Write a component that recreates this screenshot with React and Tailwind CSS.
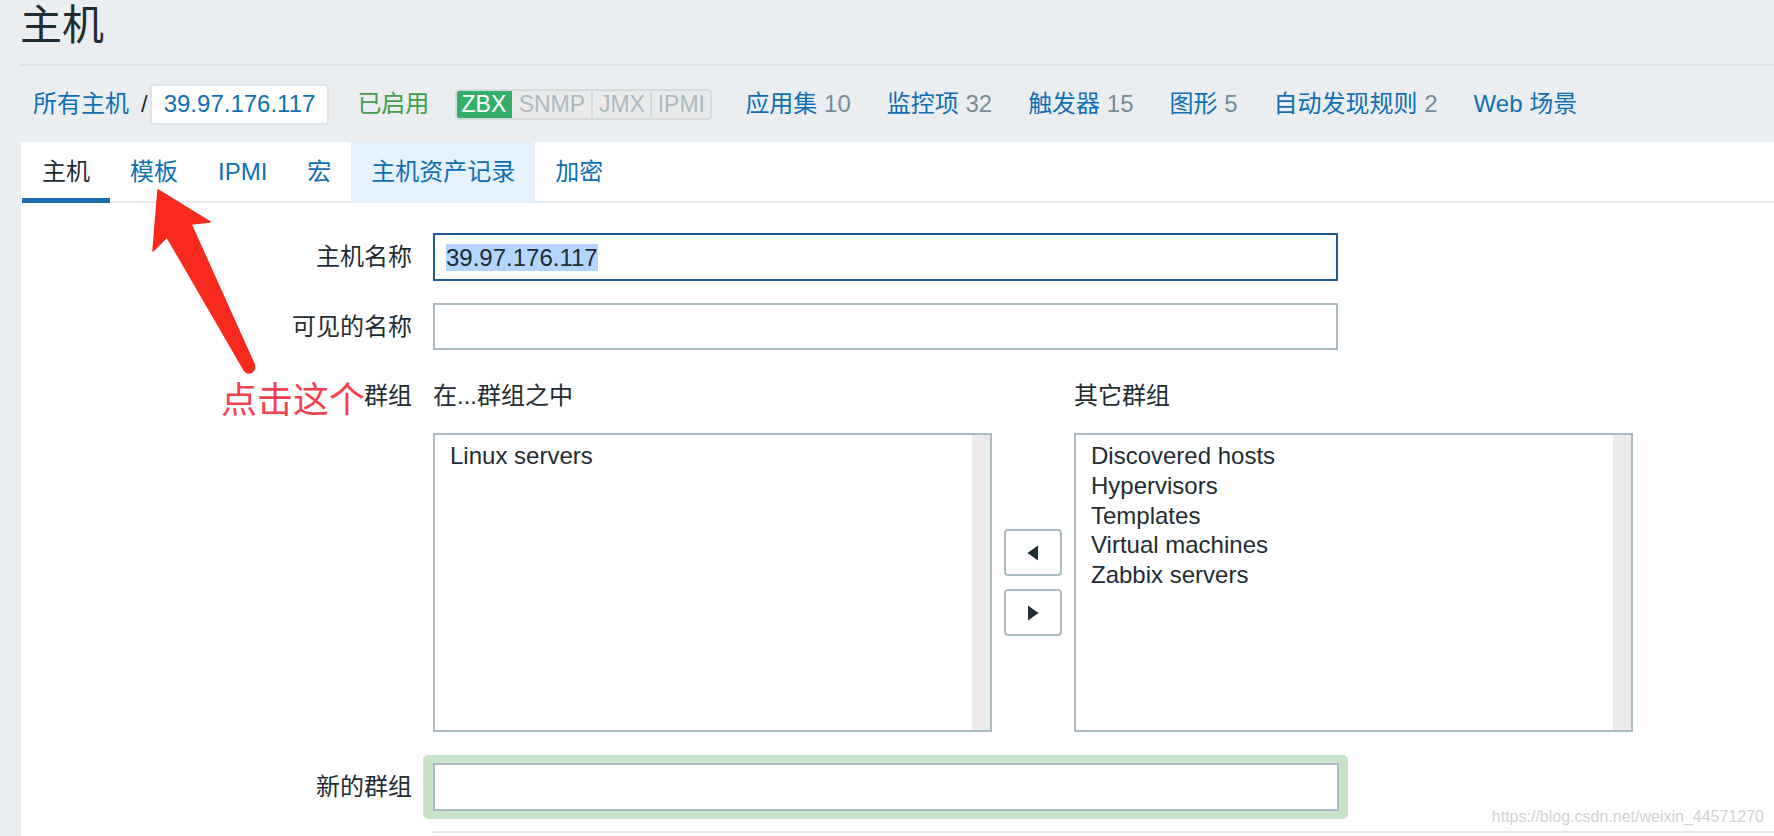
const links = [
  ["应用集", "10"],
  ["监控项", "32"],
  ["触发器", "15"],
  ["图形", "5"],
  ["自动发现规则", "2"],
  ["Web 场景", null],
];

const tabs = [
  { name: "主机", active: true },
  { name: "模板" },
  { name: "IPMI" },
  { name: "宏" },
  { name: "主机资产记录", hl: true },
  { name: "加密" },
];

function ListBox({ items }) {
  return (
    <div className="w-[559px] h-[299px] border-2 border-[#acbbc2] flex">
      <div className="flex-1 pl-[15px] pt-[6px] text-[24px] leading-[29.75px] text-[#1f2c33]">
        {items.map((item) => (
          <div key={item}>{item}</div>
        ))}
      </div>
      <div className="w-[18px] bg-[#ebebeb]" />
    </div>
  );
}

function ArrowButton({ dir }) {
  return (
    <button className="w-[58px] h-[47px] border-2 border-[#acbbc2] rounded-[4px] bg-white flex items-center justify-center">
      <svg width="12" height="16" viewBox="0 0 12 16">
        {dir === "left" ? (
          <path d="M11 0.5 L0.5 8 L11 15.5 Z" fill="#1f2c33" />
        ) : (
          <path d="M1 0.5 L11.5 8 L1 15.5 Z" fill="#1f2c33" />
        )}
      </svg>
    </button>
  );
}

function Label({ children }) {
  return (
    <div className="w-[391px] shrink-0 text-right text-[24px] text-[#1f2c33]">
      {children}
    </div>
  );
}

export default function App() {
  return (
    <div className="relative w-[1774px] h-[836px] overflow-hidden bg-[#ebeef0] font-['Liberation_Sans','Noto_Sans_CJK_SC',sans-serif] flex flex-col">
      {/* header */}
      <div className="ml-[20px] h-[66px] border-b-2 border-[#dde2e6] shrink-0">
        <h1 className="pt-[5px] text-[42px] leading-[42px] text-[#1f2c33]">主机</h1>
      </div>

      {/* breadcrumbs + nav */}
      <div className="h-[76px] shrink-0 flex items-center pl-[33px] text-[24px]">
        <span className="text-[#0f6fb4]">所有主机</span>
        <span className="ml-[12px] mr-[2px] text-[#1f2c33]">/</span>
        <span className="h-[41px] px-[12px] flex items-center bg-white border-2 border-[#dfe4e7] rounded-[4px] text-[#0f6fb4]">
          39.97.176.117
        </span>
        <span className="ml-[28px] text-[#429e47]">已启用</span>
        <div className="ml-[26px] h-[31px] flex rounded-[4px] overflow-hidden border-2 border-[#d5dce0] text-[23px] leading-none">
          <span className="w-[57px] -ml-[2px] -my-[2px] h-[31px] flex items-center justify-center bg-[#34af67] text-white rounded-l-[4px]">
            ZBX
          </span>
          <span className="w-[79px] flex items-center justify-center bg-[#ebebeb] text-[#acbbc2]">
            SNMP
          </span>
          <span className="w-[59px] flex items-center justify-center bg-[#ebebeb] text-[#acbbc2] border-l-2 border-[#d5dce0]">
            JMX
          </span>
          <span className="w-[60px] flex items-center justify-center bg-[#ebebeb] text-[#acbbc2] border-l-2 border-[#d5dce0]">
            IPMI
          </span>
        </div>
        <div className="ml-[33px] flex gap-[36px]">
          {links.map(([name, n]) => (
            <span key={name} className="whitespace-nowrap">
              <span className="text-[#0f6fb4]">{name}</span>
              {n && <span className="text-[#768d99]"> {n}</span>}
            </span>
          ))}
        </div>
      </div>

      {/* main panel */}
      <div className="ml-[21px] flex-1 bg-white">
        <div className="h-[61px] flex pl-[1px] border-b-2 border-[#ebeef0]">
          {tabs.map((t) => (
            <div
              key={t.name}
              className={
                "h-[61px] -mb-[2px] px-[20px] pt-[4px] flex items-center text-[24px] border-b-[5px] " +
                (t.active
                  ? "border-[#1f6fb0] text-[#1f2c33]"
                  : "border-transparent text-[#0f6fb4]") +
                (t.hl ? " bg-[#e5f1fc]" : "")
              }
            >
              {t.name}
            </div>
          ))}
        </div>

        <div className="pt-[30px]">
          <div className="flex items-center">
            <Label>主机名称</Label>
            <div className="ml-[21px] w-[905px] h-[48px] border-2 border-[#1f5c93] flex items-center pl-[11px] text-[24px] text-[#1f2c33]">
              <span className="bg-[#b4d5fe] leading-[27px]">39.97.176.117</span>
            </div>
          </div>

          <div className="mt-[22px] flex items-center">
            <Label>可见的名称</Label>
            <div className="ml-[21px] w-[905px] h-[47px] border-2 border-[#acbbc2]" />
          </div>

          <div className="mt-[33px] flex leading-[26px] text-[24px] text-[#1f2c33]">
            <Label>群组</Label>
            <div className="ml-[21px] w-[641px]">在...群组之中</div>
            <div>其它群组</div>
          </div>

          <div className="mt-[24px] flex">
            <div className="w-[412px] shrink-0" />
            <ListBox items={["Linux servers"]} />
            <div className="mx-[12px] flex flex-col justify-center gap-[13px]">
              <ArrowButton dir="left" />
              <ArrowButton dir="right" />
            </div>
            <ListBox
              items={[
                "Discovered hosts",
                "Hypervisors",
                "Templates",
                "Virtual machines",
                "Zabbix servers",
              ]}
            />
          </div>

          <div className="mt-[23px] flex items-center">
            <Label>新的群组</Label>
            <div className="ml-[11px] w-[925px] h-[64px] bg-[#c7e3c8] rounded-[5px] pl-[10px] pt-[8px]">
              <div className="w-[906px] h-[48px] border-2 border-[#acbbc2] bg-white" />
            </div>
          </div>

          <div className="mt-[12px] ml-[412px] h-[10px] border-t-2 border-[#e3e8eb]" />
        </div>
      </div>

      {/* annotation */}
      <svg
        className="absolute left-0 top-0 pointer-events-none"
        width="1774"
        height="836"
      >
        <path
          d="M158 190 L210 222 L191 224 L254 364 Q256 372 249 373 Q245 373 243 368 L167 237 L153 251 Z"
          fill="#f8291d"
          stroke="#f8291d"
          strokeWidth="1.5"
          strokeLinejoin="round"
        />
      </svg>
      <div className="absolute left-[221px] top-[383px] text-[36px] leading-[36px] text-[#f4404f]">
        点击这个
      </div>

      <div className="absolute right-[10px] top-[808px] text-[16px] leading-[18px] text-[#d2d2d2]">
        https://blog.csdn.net/weixin_44571270
      </div>
    </div>
  );
}
